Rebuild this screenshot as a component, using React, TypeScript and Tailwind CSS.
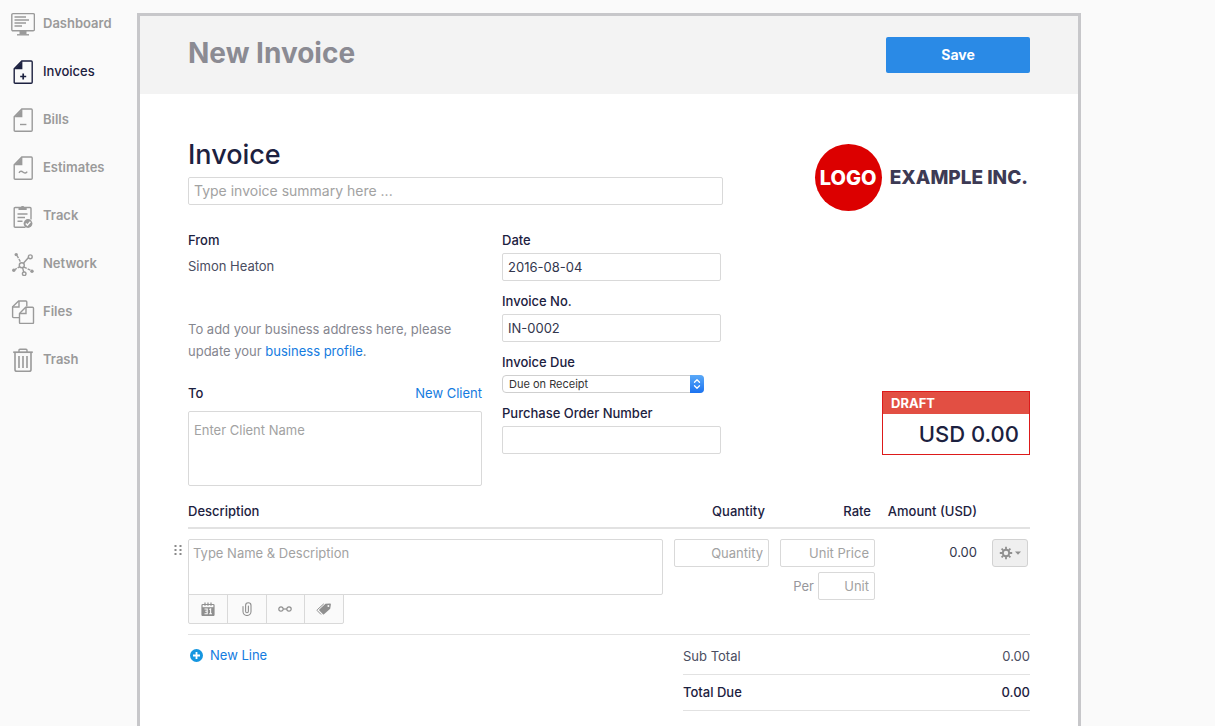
import type { ReactNode } from "react";

type NavItem = {
  label: string;
  icon: ReactNode;
  active?: boolean;
};

const inputClass =
  "block h-7 w-full rounded-[2px] border border-[#d9d9d9] bg-white px-[5px] text-[13px] text-[#32364d] outline-none placeholder:text-[#a2a2a2]";
const labelClass = "block text-[13px] leading-5 font-medium text-[#1c2140]";
const toolClass = "flex h-full flex-1 items-center justify-center border-r border-[#d9d9d9] text-[#8f8f8f] last:border-r-0";

function Icon({ children }: { children: ReactNode }) {
  return (
    <svg className="h-6 w-6 shrink-0" viewBox="0 0 24 24" fill="none" stroke="currentColor" strokeWidth="1.4" aria-hidden="true">
      {children}
    </svg>
  );
}

function PageIcon({ children }: { children: ReactNode }) {
  return (
    <Icon>
      <path d="M10.8 1H20.2q1 0 1 1V22.300q0 1-1 1H4.200q-1 0-1-1V8.800z" />
      <path d="M11.400 1V9.200H3.200z" fill="currentColor" stroke="none" />
      {children}
    </Icon>
  );
}

const navItems: NavItem[] = [
  {
    label: "Dashboard",
    icon: (
      <Icon>
        <rect x="0.8" y="1.600" width="22.600" height="17.200" rx="1.200" />
        <path d="M3.500 5h11.500M3.500 8h14.500M3.500 11h11.500M3.500 14h7.500" />
        <path d="M8.500 19h7v3.500h-7z" fill="currentColor" stroke="none" />
        <path d="M6 22.800h12" />
      </Icon>
    ),
  },
  {
    label: "Invoices",
    active: true,
    icon: (
      <PageIcon>
        <path d="M12.200 13.500v6M9.200 16.500h6" strokeWidth="1.700" />
      </PageIcon>
    ),
  },
  {
    label: "Bills",
    icon: (
      <PageIcon>
        <path d="M9 16.500h6.400" />
      </PageIcon>
    ),
  },
  {
    label: "Estimates",
    icon: (
      <PageIcon>
        <path d="M8 16.800c1.200-2 2.600-1.800 4.200-.6s2.800 1.200 4-.6" />
      </PageIcon>
    ),
  },
  {
    label: "Track",
    icon: (
      <Icon>
        <path d="M14.500 23.200H4.200q-1 0-1-1V4.500q0-1 1-1H19q1 0 1 1V15.500" />
        <path d="M7.500 6V3.500h2.200a2 2 0 0 1 3.800 0h2.200V6z" fill="currentColor" stroke="none" />
        <path d="M6.500 10h10M6.500 13.500h7.500M6.500 17.200h5" />
        <circle cx="17" cy="19.500" r="4.400" fill="currentColor" stroke="none" />
        <path d="M14.800 19.500l1.600 1.700 3-3.400" className="stroke-[#fafafa]" />
      </Icon>
    ),
  },
  {
    label: "Network",
    icon: (
      <Icon>
        <path d="M6 3.500l3.800 7M3.200 18l5.400-3.200M13 15.200l8 3.600" strokeDasharray="3 1" />
        <path d="M12.600 11l5.600-6.300M11.600 15.600l1.300 5.200" />
        <circle cx="10.800" cy="13.200" r="2.500" />
        <circle cx="19.300" cy="4.800" r="1.900" fill="#fafafa" />
        <circle cx="13.200" cy="21.800" r="1.800" fill="#fafafa" />
        <circle cx="5.200" cy="2.600" r="1.700" fill="currentColor" stroke="none" />
        <circle cx="2.800" cy="18.200" r="1.700" fill="currentColor" stroke="none" />
        <circle cx="21" cy="19.200" r="1.700" fill="currentColor" stroke="none" />
      </Icon>
    ),
  },
  {
    label: "Files",
    icon: (
      <Icon>
        <path d="M8.500 17.600H2.600q-1 0-1-1V6.800L7.600 1h7.200q1 0 1 1v4.500" />
        <path d="M8 1v6H1.600" />
        <path d="M14.700 7.300h6.800q1 0 1 1v14.200q0 1-1 1H9.500q-1 0-1-1V13.500z" />
        <path d="M15 7.300v6.200H8.500" />
      </Icon>
    ),
  },
  {
    label: "Trash",
    icon: (
      <Icon>
        <path d="M2.200 4.200h19.600" strokeWidth="1.700" />
        <path d="M8 4V2.200q0-1 1-1h6q1 0 1 1V4" />
        <path d="M4 4.500V21.400q0 1.800 1.800 1.800h12.400q1.800 0 1.800-1.800V4.500" strokeWidth="1.600" />
        <path d="M8 8v12M12 8v12M16 8v12" strokeWidth="1.600" />
      </Icon>
    ),
  },
];

function Sidebar() {
  return (
    <nav className="flex w-[137px] shrink-0 flex-col gap-6 pt-3 pl-[11px]">
      {navItems.map((item) => (
        <a
          key={item.label}
          href="#"
          className={`flex h-6 items-center gap-2 text-[13px] ${item.active ? "font-medium text-[#1c2140]" : "font-semibold text-[#9a9a9a]"}`}
        >
          {item.icon}
          {item.label}
        </a>
      ))}
    </nav>
  );
}

function Logo() {
  return (
    <div className="flex items-center gap-2 pr-0.5 font-extrabold">
      <div className="flex h-[67px] w-[67px] items-center justify-center rounded-full bg-[#dc0000] text-[20px] text-white">LOGO</div>
      <span className="pt-0.5 text-[19px] text-[#3d3a54]">EXAMPLE INC.</span>
    </div>
  );
}

function Parties() {
  return (
    <div className="w-[294px]">
      <h3 className={labelClass}>From</h3>
      <p className="mt-1.5 text-[13px] leading-5 text-[#4a4d61]">Simon Heaton</p>
      <p className="mt-[42px] text-[13px] leading-[22px] text-[#85868f]">
        To add your business address here, please update your <a href="#" className="text-[#147be0]">business profile</a>.
      </p>
      <div className="mt-[21px] flex justify-between">
        <label htmlFor="client" className={labelClass}>To</label>
        <a href="#" className="text-[13px] leading-5 text-[#147be0]">New Client</a>
      </div>
      <textarea
        id="client"
        placeholder="Enter Client Name"
        className="mt-2 block h-[75px] w-full resize-none rounded-[2px] border border-[#d9d9d9] px-[5px] py-2 text-[13px] leading-5 outline-none placeholder:text-[#a2a2a2]"
      />
    </div>
  );
}

function InvoiceFields() {
  return (
    <div className="flex w-[219px] flex-col gap-2.5">
      <div>
        <label htmlFor="date" className={labelClass}>Date</label>
        <input id="date" defaultValue="2016-08-04" className={`mt-[3px] ${inputClass}`} />
      </div>
      <div>
        <label htmlFor="number" className={labelClass}>Invoice No.</label>
        <input id="number" defaultValue="IN-0002" className={`mt-[3px] ${inputClass}`} />
      </div>
      <div>
        <label htmlFor="due" className={labelClass}>Invoice Due</label>
        <div className="relative mt-[3px] w-[202px]">
          <select id="due" className="block h-[18px] w-full appearance-none rounded-[4px] border border-[#cfcfcf] bg-white pr-4 pl-1.5 text-[11px] leading-4 text-[#333333] outline-none">
            <option>Due on Receipt</option>
          </select>
          <span className="pointer-events-none absolute inset-y-0 right-0 flex w-3.5 items-center justify-center rounded-r-[4px] bg-gradient-to-b from-[#5aa9f8] to-[#1a72f0]">
            <svg className="h-3 w-2" viewBox="0 0 8 12" fill="none" stroke="white" strokeWidth="1.300" strokeLinecap="round" strokeLinejoin="round" aria-hidden="true">
              <path d="M1.500 4.300L4 1.800l2.500 2.500M1.500 7.700L4 10.200l2.500-2.500" />
            </svg>
          </span>
        </div>
      </div>
      <div>
        <label htmlFor="po" className={labelClass}>Purchase Order Number</label>
        <input id="po" className={`mt-[3px] ${inputClass}`} />
      </div>
    </div>
  );
}

function LineTools() {
  return (
    <div className="-mt-px flex h-[30px] w-[156px] rounded-b-[2px] border border-[#d9d9d9] bg-[#fafafa]">
      <button type="button" aria-label="Set date" className={toolClass}>
        <svg className="h-3.5 w-3.5" viewBox="0 0 14 14" fill="none" aria-hidden="true">
          <rect x="1" y="2.500" width="12" height="11" rx="0.800" stroke="currentColor" strokeWidth="1.200" />
          <path d="M1 5.200h12v8.300H1z" fill="currentColor" />
          <path d="M4 0.500v3.200M7 0.500v3.200M10 0.500v3.200" stroke="currentColor" strokeWidth="1.200" />
          <path d="M3.500 7h2.700v2.300H4.200M6.200 9.300v2.400H3.500M8.300 7.500l1.300-.7v4.900M8.200 11.700h2.800" className="stroke-[#fafafa]" strokeWidth="1.100" />
        </svg>
      </button>
      <button type="button" aria-label="Attach file" className={toolClass}>
        <svg className="h-3.5 w-2.5" viewBox="0 0 10 14" fill="none" stroke="currentColor" strokeWidth="1.100" strokeLinecap="round" aria-hidden="true">
          <path d="M1 4.500V9.500a4 4 0 0 0 8 0V3.400a2.700 2.700 0 0 0-5.400 0V9.300a1.400 1.400 0 0 0 2.800 0V4" />
        </svg>
      </button>
      <button type="button" aria-label="Link item" className={toolClass}>
        <svg className="h-2 w-3.5" viewBox="0 0 14 8" fill="none" stroke="currentColor" strokeWidth="1.200" aria-hidden="true">
          <circle cx="3" cy="4" r="2.200" />
          <circle cx="11" cy="4" r="2.200" />
          <path d="M5.200 4h3.600" />
        </svg>
      </button>
      <button type="button" aria-label="Add tag" className={toolClass}>
        <svg className="h-3.5 w-4" viewBox="0 0 16 14" aria-hidden="true">
          <path d="M9.500 1.800l4.600-.3q.9 0 .8.900l-.7 4.300-6.200 5.600q-.5.500-1 0L3.300 8.600q-.5-.5 0-1z" fill="currentColor" />
          <path d="M7.800 1.800L1.300 7.700q-.4.500 0 1l3.800 3.800" fill="none" stroke="currentColor" strokeWidth="1" />
          <circle cx="12.400" cy="4" r="1" className="fill-[#fafafa]" />
        </svg>
      </button>
    </div>
  );
}

function LineItems() {
  return (
    <table className="mt-[15px] w-full table-fixed border-collapse text-[13px] leading-5">
      <thead>
        <tr className="border-b-2 border-[#e2e2e2] text-[#1c2140]">
          <th className="pb-1.5 text-left font-medium">Description</th>
          <th className="w-[106px] pr-1 pb-1.5 text-right font-medium">Quantity</th>
          <th className="w-[106px] pr-1 pb-1.5 text-right font-medium">Rate</th>
          <th className="w-[102px] pb-1.5 text-right font-medium">Amount (USD)</th>
          <th className="w-[53px]" aria-label="Actions" />
        </tr>
      </thead>
      <tbody>
        <tr className="border-b border-[#e2e2e2] align-top">
          <td className="relative pt-2.5 pb-2.5">
            <button type="button" aria-label="Move line" className="absolute top-[15px] -left-3.5">
              <svg className="h-3 w-2" viewBox="0 0 8 12" fill="#8a8a8a" aria-hidden="true">
                <path d="M0.500 1h2v2h-2zM5.500 1h2v2h-2zM0.500 5h2v2h-2zM5.500 5h2v2h-2zM0.500 9h2v2h-2zM5.500 9h2v2h-2z" />
              </svg>
            </button>
            <textarea
              aria-label="Description"
              placeholder="Type Name & Description"
              className="block h-14 w-full resize-none rounded-t-[2px] rounded-br-[2px] border border-[#d9d9d9] px-1 py-[3px] text-[13px] leading-5 outline-none placeholder:text-[#a2a2a2]"
            />
            <LineTools />
          </td>
          <td className="pt-2.5 pl-[11px]">
            <input aria-label="Quantity" placeholder="Quantity" className={`text-right ${inputClass}`} />
          </td>
          <td className="pt-2.5 pl-[11px]">
            <input aria-label="Unit price" placeholder="Unit Price" className={`text-right ${inputClass}`} />
            <div className="mt-[5px] flex items-center justify-end gap-1">
              <label htmlFor="unit" className="text-[#97979c]">Per</label>
              <div className="w-[57px]">
                <input id="unit" placeholder="Unit" className={`text-right ${inputClass}`} />
              </div>
            </div>
          </td>
          <td className="pt-[13px] text-right text-[#32364d]">0.00</td>
          <td className="pt-2.5 pl-[15px]">
            <button type="button" aria-label="Line options" className="flex h-7 w-9 items-center justify-center gap-0.5 rounded-[3px] border border-[#d2d2d2] bg-[#efefef] text-[#8f8f8f]">
              <svg className="h-3.5 w-3.5" viewBox="0 0 14 14" fill="none" stroke="currentColor" aria-hidden="true">
                <circle cx="7" cy="7" r="3.200" strokeWidth="1.900" />
                <path d="M7 .8v2.400M7 10.800v2.400M.8 7h2.400M10.800 7h2.400M2.600 2.600l1.700 1.700M9.700 9.700l1.700 1.700M2.600 11.400l1.700-1.700M9.700 4.300l1.700-1.700" strokeWidth="1.800" />
              </svg>
              <svg className="h-1 w-1.5" viewBox="0 0 6 4" fill="currentColor" aria-hidden="true">
                <path d="M0 0.500h6L3 3.800z" />
              </svg>
            </button>
          </td>
        </tr>
      </tbody>
    </table>
  );
}

export default function App() {
  return (
    <div className="flex min-h-screen bg-[#fafafa] font-['Inter','Liberation_Sans',sans-serif]">
      <Sidebar />
      <main className="mt-[13px] mr-[134px] min-w-0 flex-1 border-[3px] border-b-0 border-[#c7c7ca] bg-white">
        <header className="flex h-[78px] items-center justify-between bg-[#f3f3f3] px-12">
          <h1 className="pb-1 text-[28px] leading-9 font-bold text-[#8b8b93]">New Invoice</h1>
          <button type="button" className="h-9 w-36 rounded-[2px] bg-[#2a8ae6] pb-0.5 text-[14px] font-bold text-white">Save</button>
        </header>

        <form className="px-12 pt-[45px] pb-4">
          <div className="flex items-start justify-between">
            <div className="w-[535px]">
              <h2 className="text-[27px] leading-8 font-medium text-[#1c2140]">
                <label htmlFor="summary">Invoice</label>
              </h2>
              <input
                id="summary"
                placeholder="Type invoice summary here ..."
                className="mt-1.5 block h-7 w-full rounded-[2px] border border-[#d9d9d9] px-[5px] pb-0.5 text-[14px] outline-none placeholder:text-[#a2a2a2]"
              />
            </div>
            <div className="pt-[5px]">
              <Logo />
            </div>
          </div>

          <div className="mt-[19px] flex gap-5">
            <Parties />
            <InvoiceFields />
            <div className="mb-[31px] ml-auto w-[148px] self-end border border-[#dd1a1a]">
              <p className="bg-[#e24f43] px-2 text-[13px] leading-[22px] font-bold text-white">DRAFT</p>
              <p className="px-2.5 text-right text-[22px] leading-10 font-medium text-[#1c2140]">USD 0.00</p>
            </div>
          </div>

          <LineItems />

          <div className="flex justify-between text-[13px]">
            <div className="pt-2.5">
              <button type="button" className="flex items-center gap-[7px] pl-0.5 leading-5 text-[#147be0]">
                <svg className="h-[13px] w-[13px]" viewBox="0 0 13 13" aria-hidden="true">
                  <circle cx="6.500" cy="6.500" r="6.500" fill="#1596e0" />
                  <path d="M6.500 3v7M3 6.500h7" stroke="white" strokeWidth="1.800" />
                </svg>
                New Line
              </button>
            </div>
            <dl className="w-[347px] text-[#4a4d61]">
              <div className="flex h-10 items-center justify-between border-b border-[#e2e2e2] pt-1">
                <dt>Sub Total</dt>
                <dd>0.00</dd>
              </div>
              <div className="flex h-9 items-center justify-between border-b border-[#e2e2e2] font-medium text-[#1c2140]">
                <dt>Total Due</dt>
                <dd>0.00</dd>
              </div>
            </dl>
          </div>
        </form>
      </main>
    </div>
  );
}
